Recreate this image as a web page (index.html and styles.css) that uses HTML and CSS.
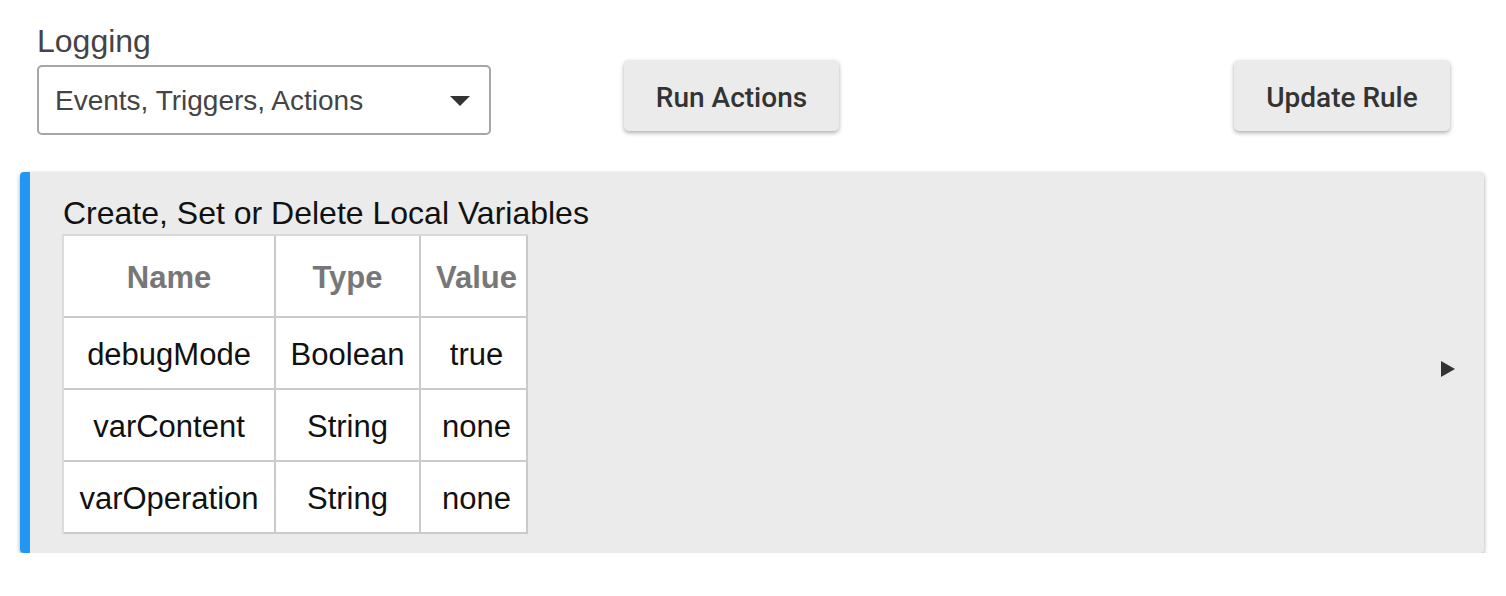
FILE: index.html
```html
<!DOCTYPE html>
<html lang="en">
<head>
<meta charset="utf-8">
<title>Rule</title>
<link rel="stylesheet" href="styles.css">
</head>
<body>
<div class="toolbar">
  <div class="field">
    <label class="field-label">Logging</label>
    <div class="select">
      <span class="select-value">Events, Triggers, Actions</span>
      <span class="caret"></span>
    </div>
  </div>
  <button class="btn btn-run">Run Actions</button>
  <button class="btn btn-update">Update Rule</button>
</div>
<section class="panel">
  <div class="panel-body">
    <h2 class="panel-title">Create, Set or Delete Local Variables</h2>
    <table class="vars">
      <thead>
        <tr><th class="c-name">Name</th><th class="c-type">Type</th><th class="c-value">Value</th></tr>
      </thead>
      <tbody>
        <tr><td>debugMode</td><td>Boolean</td><td class="v">true</td></tr>
        <tr><td>varContent</td><td>String</td><td class="v">none</td></tr>
        <tr><td>varOperation</td><td>String</td><td class="v">none</td></tr>
      </tbody>
    </table>
  </div>
  <div class="expander">
    <svg width="14" height="16" viewBox="0 0 14 16"><path d="M0 0 L14 8 L0 16 Z" fill="#333"/></svg>
  </div>
</section>
</body>
</html>
```
FILE: styles.css
```css
* { box-sizing: border-box; }
body {
  margin: 0;
  background: #fff;
  font-family: "Liberation Sans", Arial, sans-serif;
  color: #111;
}
.toolbar {
  display: flex;
  align-items: flex-start;
  padding: 23px 0 0 37px;
}
.field {
  width: 454px;
  display: flex;
  flex-direction: column;
}
.field-label {
  font-size: 32px;
  line-height: 37px;
  color: #444;
  margin-bottom: 5px;
}
.select {
  height: 70px;
  border: 2px solid #a6a6a6;
  border-radius: 5px;
  display: flex;
  align-items: center;
  padding: 2px 19px 0 16px;
  background: #fff;
}
.select-value {
  font-size: 28px;
  color: #444;
  flex: 1;
}
.caret {
  width: 0;
  height: 0;
  border-left: 10px solid transparent;
  border-right: 10px solid transparent;
  border-top: 10px solid #333;
}
.btn {
  margin-top: 37px;
  height: 71px;
  border: none;
  border-radius: 5px;
  background: #ebebeb;
  box-shadow: 0 2px 4px rgba(0,0,0,0.32);
  font-family: Roboto, "Liberation Sans", sans-serif;
  font-weight: 500;
  font-size: 28px;
  color: #333;
  padding: 3px 0 0;
}
.btn-run { width: 215px; margin-left: 133px; }
.btn-update { width: 216px; margin-left: 395px; }
.panel {
  margin: 37px 22px 0 20px;
  height: 381px;
  display: flex;
  background: #ebebeb;
  border-left: 10px solid #2196f3;
  border-radius: 4px;
  box-shadow: 0 2px 4px rgba(0,0,0,0.35);
}
.panel-body {
  padding: 23px 0 20px 33px;
}
.panel-title {
  margin: 0 0 2px;
  font-size: 32px;
  line-height: 37px;
  font-weight: normal;
  color: #111;
}
.vars {
  border-collapse: separate;
  border-spacing: 0;
  table-layout: fixed;
  width: 466px;
  margin-left: -1px;
  background: #fff;
  border-top: 2px solid #d8d8d8;
  border-left: 2px solid #dcdcdc;
}
.vars th, .vars td {
  border-right: 2px solid #cacaca;
  border-bottom: 2px solid #cacaca;
  text-align: center;
  font-size: 31px;
  line-height: 36px;
  padding: 4px 0 0;
}
.vars th {
  height: 82px;
  color: #777;
  font-weight: bold;
}
.vars td {
  height: 72px;
  color: #111;
}
.vars .c-name { width: 212px; }
.vars .c-type { width: 145px; }
.vars .c-value { width: 107px; padding-left: 6px; }
.vars .v { padding-left: 6px; }
.expander {
  margin-left: auto;
  margin-right: 29px;
  align-self: center;
  margin-top: 12px;
  display: flex;
}
```
